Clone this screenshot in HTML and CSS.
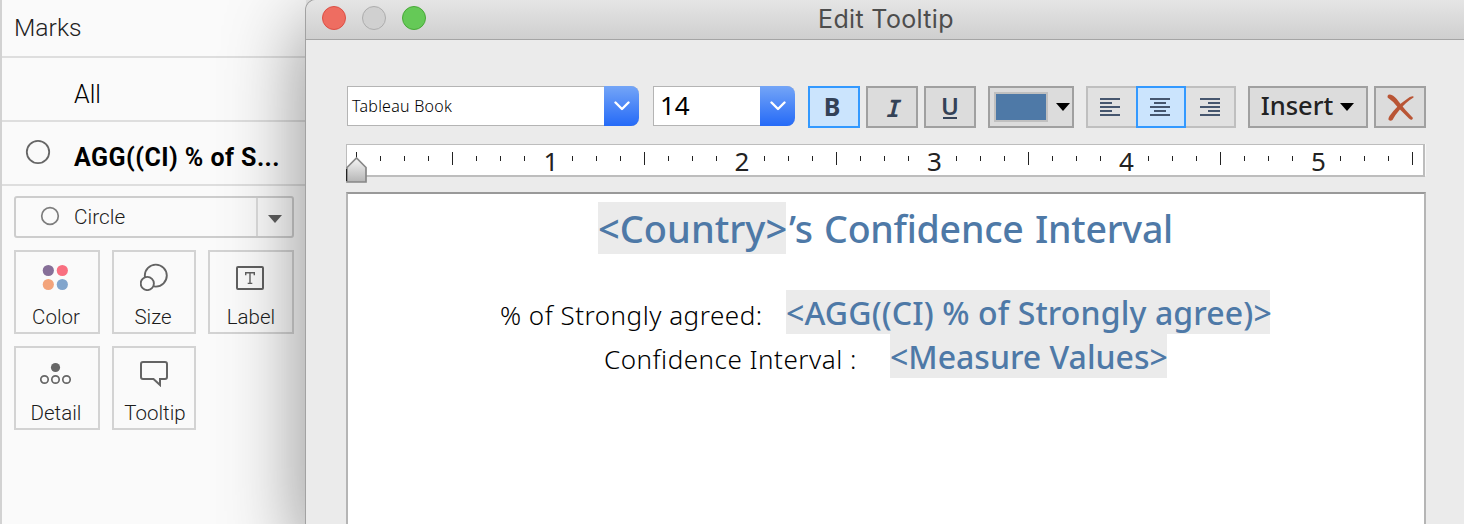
FILE: index.html
```html
<!DOCTYPE html>
<html lang="en">
<head>
<meta charset="utf-8">
<title>Edit Tooltip</title>
<link rel="stylesheet" href="styles.css">
</head>
<body>
<aside class="marks">
  <h2 class="marks-title">Marks</h2>
  <div class="row"><span class="row-all">All</span></div>
  <div class="row row-agg">
    <svg class="row-icon" width="26" height="26" viewBox="0 0 26 26"><circle cx="13" cy="13" r="11.2" fill="none" stroke="#666" stroke-width="1.8"/></svg>
    <span class="agg-text">AGG((CI) % of S...</span>
  </div>
  <div class="type-select">
    <svg class="type-icon" width="20" height="20" viewBox="0 0 20 20"><circle cx="10" cy="10" r="8.3" fill="none" stroke="#7d7d7d" stroke-width="1.7"/></svg>
    <span class="type-name">Circle</span>
    <span class="type-arrow"><svg width="14" height="8" viewBox="0 0 14 8"><path d="M0 0H14L7 8Z" fill="#5f5f5f"/></svg></span>
  </div>
  <div class="cards">
    <div class="card"><svg width="28" height="28" viewBox="0 0 28 28"><circle cx="6.300" cy="7.500" r="5.600" fill="#866f98"/><circle cx="20.300" cy="7.500" r="5.600" fill="#f96f80"/><circle cx="6.300" cy="21.500" r="5.600" fill="#f3a47b"/><circle cx="20.300" cy="21.500" r="5.600" fill="#82a5cc"/></svg><span>Color</span></div>
    <div class="card mid"><svg width="28" height="28" viewBox="0 0 28 28" fill="none" stroke="#636363" stroke-width="1.900"><circle cx="15.800" cy="12.600" r="11"/><circle cx="7.300" cy="20.500" r="6.600" fill="#fafafa"/></svg><span class="t-size">Size</span></div>
    <div class="card"><svg width="28" height="28" viewBox="0 0 28 28"><rect x="1" y="4" width="26" height="22" rx="1" fill="none" stroke="#606060" stroke-width="2"/><path d="M9.700 12.300V9.700H18.300V12.300M14 9.700V20.400M11.700 20.400H16.300" fill="none" stroke="#606060" stroke-width="1.400"/></svg><span class="t-label">Label</span></div>
    <div class="card"><svg width="32" height="28" viewBox="0 0 32 28" fill="none" stroke="#666" stroke-width="1.700"><circle cx="15.500" cy="8.500" r="4.600" fill="#666" stroke="none"/><circle cx="4.500" cy="20.500" r="3.700"/><circle cx="15.500" cy="20.500" r="3.700"/><circle cx="26.500" cy="20.500" r="3.700"/></svg><span>Detail</span></div>
    <div class="card mid"><svg width="28" height="28" viewBox="0 0 28 28"><path d="M3 3H25Q27 3 27 5V18Q27 20 25 20H20V26L13.500 20H3Q1 20 1 18V5Q1 3 3 3Z" fill="none" stroke="#646464" stroke-width="2"/></svg><span class="t-label">Tooltip</span></div>
  </div>
</aside>
<main class="window">
  <header class="titlebar">
    <span class="light red"></span><span class="light gray"></span><span class="light green"></span>
    <h1 class="title">Edit Tooltip</h1>
  </header>
  <div class="toolbar">
    <div class="combo font"><span class="combo-text font-name">Tableau Book</span><span class="chev"><svg width="16" height="10" viewBox="0 0 16 10"><path d="M1.500 1.500L8 8L14.500 1.500" fill="none" stroke="#fff" stroke-width="2.400" stroke-linecap="round" stroke-linejoin="round"/></svg></span></div>
    <div class="combo size"><span class="combo-text size-num">14</span><span class="chev"><svg width="16" height="10" viewBox="0 0 16 10"><path d="M1.500 1.500L8 8L14.500 1.500" fill="none" stroke="#fff" stroke-width="2.400" stroke-linecap="round" stroke-linejoin="round"/></svg></span></div>
    <button class="btn on bold"><span>B</span></button>
    <button class="btn italic">I</button>
    <button class="btn under"><span>U</span></button>
    <button class="btn color"><span class="swatch"></span><svg width="14" height="8" viewBox="0 0 14 8"><path d="M0 0H14L7 8Z"/></svg></button>
    <div class="align">
      <button class="seg left"><svg width="20" height="18" viewBox="0 0 20 18"><path d="M0 1H20M0 5H12M0 9H20M0 13H12M0 17H20" stroke="#46566e" stroke-width="2"/></svg></button>
      <button class="seg on"><svg width="20" height="18" viewBox="0 0 20 18"><path d="M0 1H20M4 5H16M0 9H20M4 13H16M0 17H20" stroke="#46566e" stroke-width="2"/></svg></button>
      <button class="seg right"><svg width="20" height="18" viewBox="0 0 20 18"><path d="M0 1H20M8 5H20M0 9H20M8 13H20M0 17H20" stroke="#46566e" stroke-width="2"/></svg></button>
    </div>
    <button class="btn insert"><span class="t-insert">Insert</span><svg width="14" height="8" viewBox="0 0 14 8"><path d="M0 0H14L7 8Z"/></svg></button>
    <button class="btn clear"><svg width="27" height="27" viewBox="0 0 27 27" fill="#b95535"><path d="M0.500 2Q1.500 0 4 .8Q8.500 2.500 12 8Q18 16 26 24L25 25.800Q23.500 26 22 24.500L10.500 13Q6.500 7.500 2.500 5Q0 4 .5 2Z"/><path d="M26.500 2.500Q23.500 1.800 20 5Q9.500 12 2.500 22Q.8 25 1.800 26Q3.500 27.500 5.500 26Q8 21 12.500 16Q19 8 26.500 3.500Z"/></svg></button>
  </div>
  <svg class="ruler" width="1080" height="42" viewBox="346 142 1080 42">
    <defs><linearGradient id="knob" x1="0" y1="0" x2="0" y2="1"><stop offset="0" stop-color="#f6f6f6"/><stop offset="1" stop-color="#b5b5b5"/></linearGradient></defs>
    <rect x="346" y="144" width="1079" height="33" fill="#bdbdbd"/>
    <rect x="347" y="145" width="1076" height="30" fill="#fff"/>
    <path d="M1425.500 144V176" stroke="#f8f8f8"/>
    <path class="tick" d="M380.500 156v5m24-5v5m24-5v5m48-5v5m24-5v5m24-5v5m48-5v5m24-5v5m24-5v5m48-5v5m24-5v5m24-5v5m48-5v5m24-5v5m24-5v5m48-5v5m24-5v5m24-5v5m48-5v5m24-5v5m24-5v5m48-5v5m24-5v5m24-5v5m48-5v5m24-5v5m24-5v5m48-5v5m24-5v5m24-5v5m48-5v5m24-5v5m24-5v5"/>
    <path class="tick" d="M356.500 152v13M452.500 152v13M644.500 152v13M836.500 152v13M1028.500 152v13M1220.500 152v13M1412.500 152v13"/>
    <g class="num"><text x="551" y="171">1</text><text x="742" y="171">2</text><text x="934.500" y="171">3</text><text x="1126.500" y="171">4</text><text x="1318.500" y="171">5</text></g>
    <path d="M347 167.500L356.500 158L366 167.500V182H347Z" fill="url(#knob)" stroke="#888" stroke-width="1.700"/>
    <path d="M346.500 169V181" stroke="#222"/>
  </svg>
  <section class="editor">
    <p class="line heading"><span class="chip c-country">&lt;Country&gt;</span><span class="h-rest">’s Confidence Interval</span></p>
    <p class="line l1"><span class="plain">% of Strongly agreed:</span><span class="chip c-agg">&lt;AGG((CI) % of Strongly agree)&gt;</span></p>
    <p class="line l2"><span class="plain">Confidence Interval :</span><span class="chip c-mv">&lt;Measure Values&gt;</span></p>
  </section>
</main>
</body>
</html>
```
FILE: styles.css
```css
*{box-sizing:border-box}
html{height:524px;overflow:hidden}
body{margin:0;width:1464px;height:524px;overflow:hidden;display:flex;align-items:flex-start;background:#ebebeb;font-family:Roboto,"Liberation Sans",sans-serif}
h1,h2,p{margin:0;font-weight:400}
span{white-space:pre}
svg{display:block;flex:none}
button{font:inherit;padding:0;margin:0}

.marks{width:306px;height:524px;flex:none;border-left:2px solid #d2d2d2;background:#fafafa;color:#1c1c1c}
.marks-title{height:58px;border-bottom:2px solid #dedede;padding-left:12px;font-size:24.7px;font-weight:350;line-height:55px;color:#222}
.row{height:64px;border-bottom:2px solid #dedede;display:flex;align-items:center;padding-left:72px;font-size:25px;color:#000}
.row-all{font-weight:350;padding-top:11px}
.row-agg{padding-left:23px;gap:23px}
.row-icon{margin-top:-3px}
.agg-text{font-weight:700;padding-top:8px;letter-spacing:.45px}
.type-select{margin:10px 0 0 12px;width:280px;height:42px;border:2px solid #cdcdcd;border-radius:3px;display:flex;align-items:center;padding-left:24px}
.type-icon{margin-top:-2px}
.type-name{margin-left:14px;font-size:20.8px;font-weight:350}
.type-arrow{margin-left:auto;width:36px;height:38px;border-left:2px solid #dcdcdc;display:flex;align-items:center;justify-content:center;padding-top:3px}
.cards{display:grid;grid-template-columns:86px 84px 86px;grid-auto-rows:84px;gap:12px;margin:12px 0 0 12px}
.card{border:2px solid #d3d3d3;display:flex;flex-direction:column;align-items:center;padding:11px 2px 0 0;font-size:20.500px;font-weight:350;line-height:24px}
.mid{padding-right:0}
.card span{margin-top:14px}
.t-size{padding-right:2px}
.t-label{padding-left:2px}

.window{position:relative;flex:none;width:1158px;height:524px;background:#ebebeb;box-shadow:0 0 0 1px #a2a2a2,0 26px 78px 4px rgba(0,0,0,.42);border-top-left-radius:10px}
.titlebar{height:40px;display:flex;align-items:center;gap:16px;padding:0 0 4px 16px;background:linear-gradient(#e5e5e5,#cfcfcf);border-bottom:1px solid #a5a5a5;border-top-left-radius:10px}
.light{width:24px;height:24px;border-radius:50%;border:1px solid}
.red{background:#ee6d61;border-color:#dc4f45}
.gray{background:#d0d0d0;border-color:#adadad}
.green{background:#65c957;border-color:#48a938}
.title{margin-left:376px;font:400 25px Inter,sans-serif;letter-spacing:.35px;color:#4d4d4d;padding-top:3px;white-space:pre}
.toolbar{display:flex;align-items:flex-start;padding:46px 0 0 41px;height:102px;font-family:"Noto Sans",sans-serif}
.combo{height:40px;display:flex;background:#fff;border:1px solid #b4b4b4;border-right:0;border-radius:0 8px 8px 0}
.font{width:292px}
.size{width:142px;margin:0 13px 0 14px}
.combo-text{flex:1;line-height:38px;color:#000;padding-left:4px}
.font-name{font-size:16px;font-weight:350;letter-spacing:.25px}
.size-num{font-size:26px;padding-left:6px;line-height:36px}
.chev{width:35px;height:40px;margin-top:-1px;border-radius:0 8px 8px 0;background:linear-gradient(#74a5f7,#256af7);display:flex;align-items:center;justify-content:center}
.btn{height:42px;width:52px;border:2px solid #a0a0a0;background:#dcdcdc;color:#344257;display:flex;align-items:center;justify-content:center;margin-right:6px;flex:none}
.on{background:#cbe4fd;border-color:#3399ff}
.bold{font-weight:700;font-size:25px}
.bold span{margin:-2px 4px 0 0}
.italic{font:italic 700 24px "Noto Sans Mono","DejaVu Sans Mono",monospace}
.under{font-weight:600;font-size:24px;margin-right:12px}
.under span{line-height:20px;border-bottom:2px solid #344257;height:23px;width:14px;display:flex;justify-content:center}
.color{width:86px;justify-content:flex-start;padding-left:4px;margin-right:12px;gap:8px}
.swatch{width:54px;height:30px;background:#4e79a7;border:2px solid #c0c0c0}
.align{display:flex;width:150px;margin-right:12px}
.seg{height:42px;width:50px;padding:0;border:2px solid #bfbfbf;background:#e1e1e1;display:flex;align-items:center;justify-content:center}
.seg.left{border-right:0;padding-right:4px}
.seg.on{background:#cbe4fd;border-color:#39f;padding-right:2px}
.seg.right{border-left:0}
.insert{width:120px;color:#222;gap:7px;font-size:25.500px;font-weight:500}
.t-insert{margin-top:-5px}
.insert svg{margin-right:1px}
.ruler{margin-left:40px}
.tick{fill:none;stroke:#222}
.num{font:400 26px "Noto Sans",sans-serif;text-anchor:middle;fill:#222}
.editor{margin:8px 0 0 40px;width:1080px;height:332px;background:#fff;border:2px solid #b5b5b5;border-top-color:#999;border-bottom:0;padding-top:8px;font-family:"Noto Sans",sans-serif}
.line{display:flex;align-items:center;white-space:pre}
.heading{height:52px;padding-left:250px;font-size:38px;font-weight:500;color:#4e79a7}
.h-rest{padding-left:3px;font-size:37.5px;letter-spacing:-.25px;word-spacing:2px}
.chip{background:#ebebeb;display:flex;align-items:center;height:100%;color:#4e79a7;font-weight:500}
.c-country{width:188px}
.l1,.l2{height:44px;font-size:32px}
.l1{margin-top:36px;padding-left:151px}
.l2{padding-left:255px}
.plain{width:287px;padding:5px 0 0 1px;font-size:26px;font-weight:350;color:#000;letter-spacing:.5px}
.c-agg{width:484px;letter-spacing:.12px}
.c-mv{width:277px}
```
